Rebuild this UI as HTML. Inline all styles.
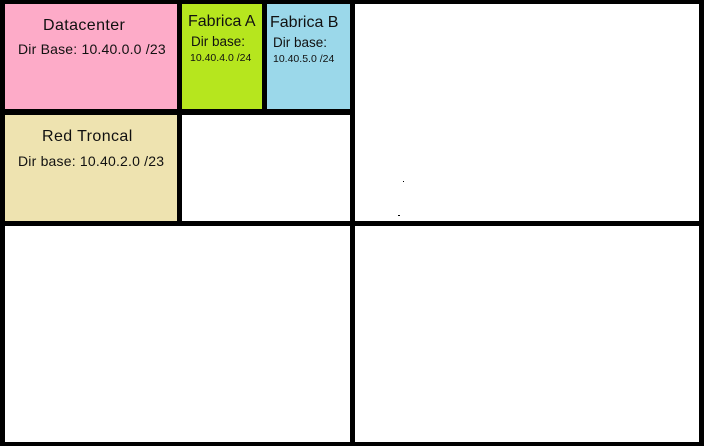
<!DOCTYPE html><html><head><style>
body{margin:0;width:704px;height:446px;background:#000;position:relative;overflow:hidden;font-family:"Liberation Sans",sans-serif;color:#111}
div.b{position:absolute}
.t{position:absolute;white-space:nowrap}
</style></head><body>
<div class="b" style="left:5px;top:4px;width:172px;height:105px;background:#fdabc8">
<div class="t" style="left:38px;top:13px;font-size:16px;letter-spacing:0.4px">Datacenter</div>
<div class="t" style="left:13px;top:37px;font-size:14px;letter-spacing:0.2px">Dir Base: 10.40.0.0 /23</div></div>
<div class="b" style="left:182px;top:4px;width:80px;height:105px;background:#b6e61e">
<div class="t" style="left:6px;top:9px;font-size:16px">Fabrica A</div>
<div class="t" style="left:9px;top:30px;font-size:13.5px">Dir base:</div>
<div class="t" style="left:8px;top:48px;font-size:10.5px">10.40.4.0 /24</div></div>
<div class="b" style="left:267px;top:4px;width:83px;height:105px;background:#9bd8ea">
<div class="t" style="left:3px;top:10px;font-size:16px">Fabrica B</div>
<div class="t" style="left:6px;top:31px;font-size:13.5px">Dir base:</div>
<div class="t" style="left:6px;top:49px;font-size:10.5px">10.40.5.0 /24</div></div>
<div class="b" style="left:5px;top:115px;width:172px;height:106px;background:#eee3b0">
<div class="t" style="left:37px;top:13px;font-size:16px;letter-spacing:0.4px">Red Troncal</div>
<div class="t" style="left:13px;top:38px;font-size:14px;letter-spacing:0.2px">Dir base: 10.40.2.0 /23</div></div>
<div class="b" style="left:182px;top:115px;width:168px;height:106px;background:#fff"></div>
<div class="b" style="left:355px;top:4px;width:344px;height:217px;background:#fff">
<div class="b" style="left:48px;top:177px;width:1px;height:1px;background:#000"></div>
<div class="b" style="left:43px;top:211px;width:2px;height:1px;background:#000"></div></div>
<div class="b" style="left:5px;top:226px;width:345px;height:216px;background:#fff"></div>
<div class="b" style="left:355px;top:226px;width:344px;height:216px;background:#fff"></div>
</body></html>
